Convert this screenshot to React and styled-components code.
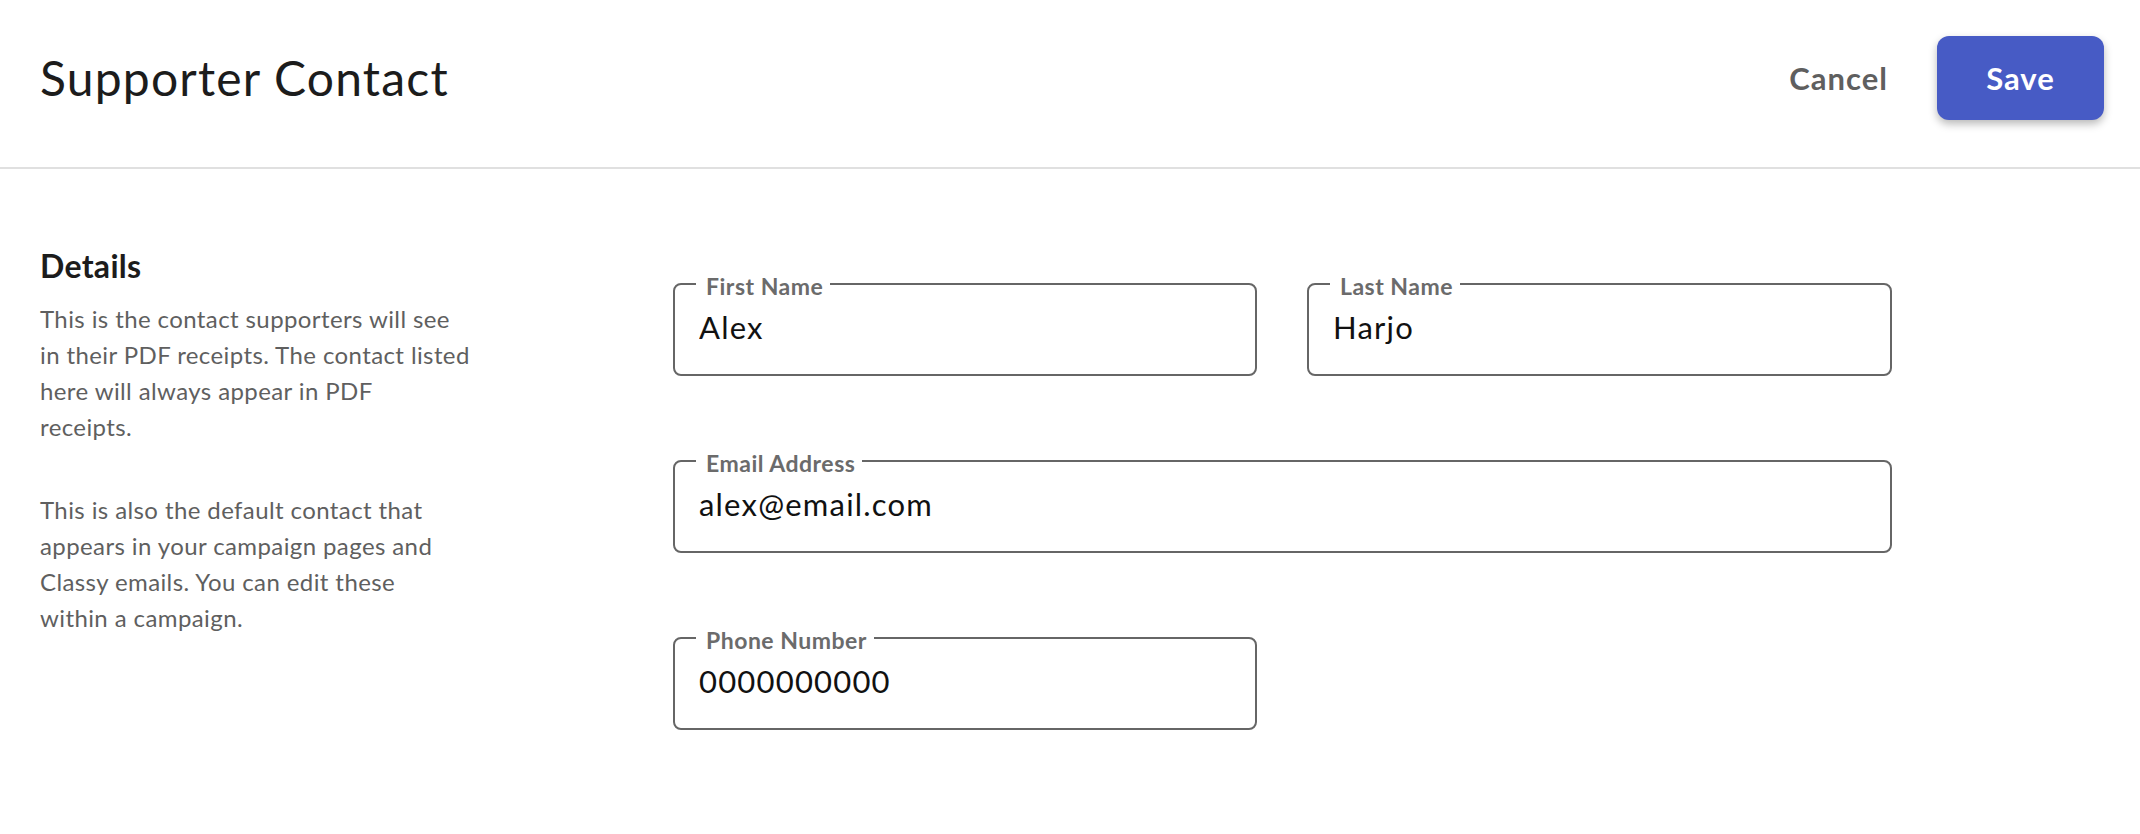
import React from 'react';
import styled, { createGlobalStyle } from 'styled-components';

const GlobalStyle = createGlobalStyle`
  html, body {
    margin: 0;
    padding: 0;
    background: #fff;
  }
  body {
    font-family: Lato, "Noto Sans", "Liberation Sans", sans-serif;
    color: #1c1c1c;
  }
  * {
    box-sizing: border-box;
  }
`;

const Page = styled.div`
  width: 100%;
  min-height: 834px;
`;

const Header = styled.header`
  display: flex;
  align-items: center;
  justify-content: space-between;
  height: 169px;
  padding: 0 36px 11px 40px;
  border-bottom: 2px solid #e0e0e0;
`;

const Title = styled.h1`
  margin: 0;
  font-size: 48px;
  font-weight: 400;
  line-height: 56px;
  letter-spacing: 1.2px;
  color: #1c1c1c;
`;

const Actions = styled.div`
  display: flex;
  align-items: center;
  gap: 49px;
`;

const Button = styled.button`
  font-family: inherit;
  font-size: 31px;
  font-weight: 700;
  letter-spacing: 1px;
  border: none;
  cursor: pointer;
  padding: 0;
  color: ${(p) => (p.$primary ? '#fff' : '#5f5f5f')};
  background: ${(p) => (p.$primary ? '#475bc5' : 'transparent')};
  width: ${(p) => (p.$primary ? '167px' : 'auto')};
  height: ${(p) => (p.$primary ? '84px' : 'auto')};
  border-radius: 12px;
  box-shadow: ${(p) => (p.$primary ? '0 4px 9px rgba(0, 0, 0, 0.28)' : 'none')};
`;

const Body = styled.main`
  display: flex;
  padding: 77px 36px 0 40px;
`;

const Aside = styled.section`
  width: 633px;
  flex-shrink: 0;
`;

const SectionTitle = styled.h2`
  margin: 0 0 15px;
  font-size: 32px;
  font-weight: 700;
  line-height: 40px;
  letter-spacing: 0.3px;
  color: #1c1c1c;
`;

const Text = styled.p`
  margin: 0 0 47px;
  font-size: 24px;
  line-height: 36px;
  letter-spacing: 0.4px;
  color: #5f5f5f;
`;

const Form = styled.form`
  display: grid;
  grid-template-columns: 584px 585px;
  column-gap: 50px;
  row-gap: 84px;
  padding-top: 37px;
`;

const Field = styled.label`
  position: relative;
  display: block;
  height: 93px;
  padding: 0 24px;
  border: 2px solid #666;
  border-radius: 8px;
  grid-column: ${(p) => (p.$wide ? '1 / span 2' : 'auto')};
`;

const Legend = styled.span`
  position: absolute;
  top: -10px;
  left: 21px;
  padding: 0 7px 0 10px;
  background: #fff;
  font-size: 23px;
  font-weight: 700;
  line-height: 23px;
  letter-spacing: 0.5px;
  color: #6b6b6b;
`;

const Input = styled.input`
  display: block;
  width: 100%;
  height: 36px;
  margin-top: 24px;
  padding: 0;
  border: none;
  outline: none;
  background: transparent;
  font-family: inherit;
  font-size: 31px;
  letter-spacing: 1.2px;
  color: #111;
`;

const fields = [
  { label: 'First Name', value: 'Alex' },
  { label: 'Last Name', value: 'Harjo' },
  { label: 'Email Address', value: 'alex@email.com', wide: true },
  { label: 'Phone Number', value: '0000000000' },
];

function App() {
  return (
    <Page>
      <GlobalStyle />
      <Header>
        <Title>Supporter Contact</Title>
        <Actions>
          <Button type="button">Cancel</Button>
          <Button type="button" $primary>
            Save
          </Button>
        </Actions>
      </Header>
      <Body>
        <Aside>
          <SectionTitle>Details</SectionTitle>
          <Text>
            This is the contact supporters will see
            <br />
            in their PDF receipts. The contact listed
            <br />
            here will always appear in PDF
            <br />
            receipts.
          </Text>
          <Text>
            This is also the default contact that
            <br />
            appears in your campaign pages and
            <br />
            Classy emails. You can edit these
            <br />
            within a campaign.
          </Text>
        </Aside>
        <Form onSubmit={(e) => e.preventDefault()}>
          {fields.map((f) => (
            <Field key={f.label} $wide={f.wide}>
              <Legend>{f.label}</Legend>
              <Input defaultValue={f.value} />
            </Field>
          ))}
        </Form>
      </Body>
    </Page>
  );
}

export default App;
